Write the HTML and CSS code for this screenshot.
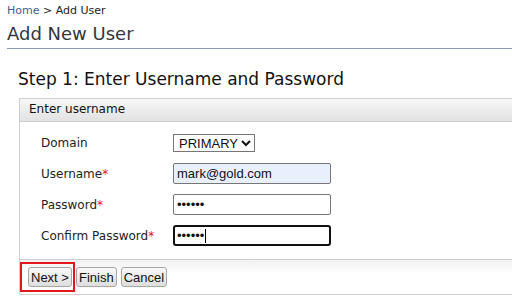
FILE: index.html
```html
<!DOCTYPE html>
<html>
<head>
<meta charset="utf-8">
<link rel="stylesheet" href="styles.css">
</head>
<body>
<div class="page">
  <div class="crumb"><a href="#">Home</a> &gt; Add User</div>
  <h1 class="title">Add New User</h1>
  <div class="content">
    <h2 class="step">Step 1: Enter Username and Password</h2>
    <div class="panel">
      <div class="panel-head">Enter username</div>
      <div class="panel-body">
        <div class="form">
          <label class="lbl">Domain</label>
          <div class="field"><select class="sel"><option>PRIMARY</option></select></div>
          <label class="lbl">Username<span class="req">*</span></label>
          <div class="field"><input class="inp autofill" type="text" value="mark@gold.com"></div>
          <label class="lbl">Password<span class="req">*</span></label>
          <div class="field"><input class="inp" type="password" value="gold12"></div>
          <label class="lbl">Confirm Password<span class="req">*</span></label>
          <div class="field caret-wrap"><input class="inp focused" type="password" value="gold12"></div>
        </div>
      </div>
      <div class="panel-foot">
        <button class="btn">Next &gt;</button>
        <button class="btn">Finish</button>
        <button class="btn">Cancel</button>
        <span class="mark"></span>
      </div>
    </div>
  </div>
</div>
</body>
</html>
```
FILE: styles.css
```css
html, body {
  margin: 0;
  padding: 0;
  background: #fff;
  overflow: hidden;
}
.page {
  width: 640px;
  padding: 0 0 0 7px;
  font-family: "DejaVu Sans", sans-serif;
  color: #222;
}
.crumb {
  font-size: 11px;
  line-height: 13px;
  padding-top: 4px;
  color: #222;
}
.crumb a {
  color: #41608f;
  text-decoration: none;
}
.title {
  margin: 6px 0 0 0;
  font-size: 18px;
  line-height: 22px;
  font-weight: normal;
  color: #33373c;
  padding-bottom: 3px;
  border-bottom: 1px solid #8b9bb7;
}
.content {
  padding-left: 11px;
}
.step {
  margin: 20px 0 0 0;
  font-size: 17px;
  line-height: 21px;
  font-weight: normal;
  color: #111;
}
.panel {
  margin: 8px 0 0 1px;
  border: 1px solid #cfcfcf;
}
.panel-head {
  height: 22px;
  line-height: 21px;
  font-size: 12px;
  padding-left: 9px;
  color: #111;
  background: linear-gradient(#f7f7f7, #e2e2e2);
  border-bottom: 1px solid #cfcfcf;
}
.panel-body {
  padding: 5px 0 8px 21px;
}
.form {
  display: grid;
  grid-template-columns: 132px 158px;
  grid-auto-rows: 31px;
  align-items: center;
}
.lbl {
  font-size: 12px;
  color: #222;
}
.req {
  color: #e8102a;
}
.sel {
  font-family: "Liberation Sans", Arial, sans-serif;
  font-size: 13px;
  height: 18px;
  padding: 0 0 0 1px;
  border: 1px solid #767676;
  border-radius: 0;
  background: #fff;
  color: #111;
}
.inp {
  box-sizing: border-box;
  width: 158px;
  height: 21px;
  font-family: "Liberation Sans", Arial, sans-serif;
  font-size: 13px;
  padding: 1px 3px;
  border: 1px solid #767676;
  border-radius: 2px;
  color: #111;
  background: #fff;
}
.autofill {
  background: #e8f0fe;
}
.focused {
  border: 2px solid #101010;
  border-radius: 3px;
  padding: 0 2px;
  outline: none;
}
.caret-wrap {
  position: relative;
}
.caret-wrap::after {
  content: "";
  position: absolute;
  left: 32px;
  top: 4px;
  width: 1px;
  height: 14px;
  background: #000;
}
.panel-foot {
  position: relative;
  border-top: 1px solid #cfcfcf;
  height: 35px;
  padding: 7px 0 0 8px;
  box-sizing: border-box;
  background: linear-gradient(#f0f0f0, #fff 14px);
  display: flex;
  gap: 4px;
  align-items: flex-start;
}
.btn {
  font-family: "Liberation Sans", Arial, sans-serif;
  font-size: 13px;
  height: 20px;
  padding: 0 2px;
  border: 1px solid #a6a6a6;
  border-radius: 3px;
  background: linear-gradient(#f8f8f8, #dddddd);
  color: #111;
}
.mark {
  position: absolute;
  left: 0;
  top: 2px;
  width: 51px;
  height: 26px;
  border: 2px solid #e4161b;
}
```
